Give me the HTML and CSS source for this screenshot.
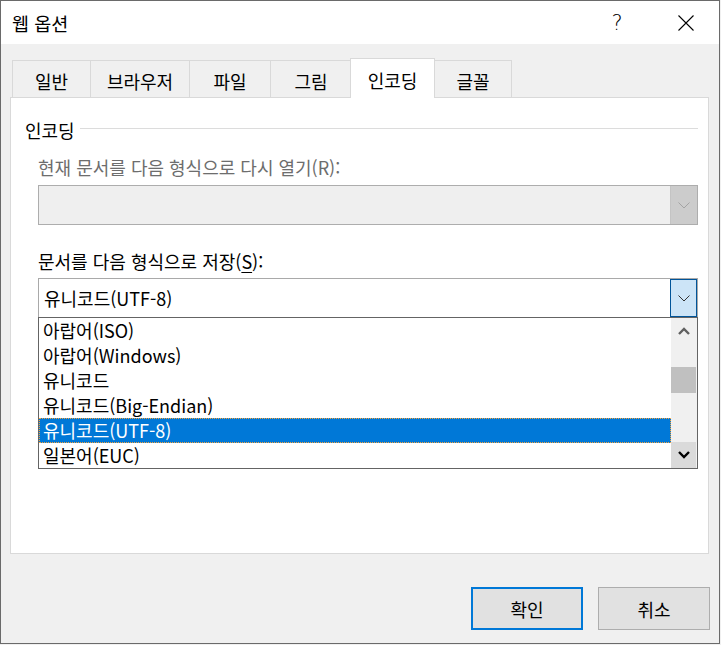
FILE: index.html
```html
<!DOCTYPE html>
<html lang="ko">
<head>
<meta charset="utf-8">
<title>웹 옵션</title>
<link rel="stylesheet" href="styles.css">
</head>
<body>
<div class="window">
  <div class="titlebar">
    <span class="title">웹 옵션</span>
    <span class="help">?</span>
    <span class="close"><svg width="16" height="16" viewBox="0 0 16 16"><path d="M0.5 0.5L15.5 15.5M15.5 0.5L0.5 15.5" stroke="#000" stroke-width="1.1" fill="none"/></svg></span>
  </div>
  <div class="tabs">
    <div class="tab t1">일반</div>
    <div class="tab t2">브라우저</div>
    <div class="tab t3">파일</div>
    <div class="tab t4">그림</div>
    <div class="tab t5 selected">인코딩</div>
    <div class="tab t6">글꼴</div>
  </div>
  <div class="panel">
    <div class="group-head"><span class="group-title">인코딩</span><span class="rule"></span></div>
    <div class="label disabled">현재 문서를 다음 형식으로 다시 열기(R):</div>
    <div class="combo combo-disabled">
      <div class="combo-value"></div>
      <div class="drop drop-disabled"><svg width="12" height="7" viewBox="0 0 12 7"><polyline points="0.5,0.5 6,6 11.5,0.5" fill="none" stroke="#a3a3a3" stroke-width="1"/></svg></div>
    </div>
    <div class="label">문서를 다음 형식으로 저장(<span class="ul">S</span>):</div>
    <div class="combo combo-active">
      <div class="combo-value">유니코드(UTF-8)</div>
      <div class="drop drop-active"><svg width="12" height="7" viewBox="0 0 12 7"><polyline points="0.5,0.5 6,6 11.5,0.5" fill="none" stroke="#333" stroke-width="1"/></svg></div>
    </div>
    <div class="listbox">
      <ul class="items">
        <li class="item">아랍어(ISO)</li>
        <li class="item">아랍어(Windows)</li>
        <li class="item">유니코드</li>
        <li class="item">유니코드(Big-Endian)</li>
        <li class="item selected-item">유니코드(UTF-8)</li>
        <li class="item">일본어(EUC)</li>
      </ul>
      <div class="scrollbar">
        <div class="sb-btn sb-up"><svg width="12" height="8" viewBox="0 0 12 8"><polyline points="1,7 6,2 11,7" fill="none" stroke="#606060" stroke-width="2.4"/></svg></div>
        <div class="sb-track"><div class="sb-thumb"></div></div>
        <div class="sb-btn sb-down"><svg width="12" height="8" viewBox="0 0 12 8"><polyline points="1,1 6,6 11,1" fill="none" stroke="#000" stroke-width="2.4"/></svg></div>
      </div>
    </div>
  </div>
  <div class="buttons">
    <button class="btn btn-default">확인</button>
    <button class="btn">취소</button>
  </div>
</div>
</body>
</html>
```

FILE: styles.css
```css
html, body {
  margin: 0;
  padding: 0;
  background: #f0f0f0;
}

.window {
  width: 720px;
  height: 644px;
  box-sizing: border-box;
  border: 1px solid #6a6a6a;
  background: #f0f0f0;
  display: flex;
  flex-direction: column;
  font-family: "Noto Sans CJK KR", "Noto Sans", sans-serif;
  font-size: 18px;
  color: #000;
}

.titlebar {
  height: 43px;
  flex: none;
  background: #fff;
  display: flex;
  align-items: center;
  padding: 0 10px 0 11px;
}

.title {
  font-size: 18.5px;
  line-height: 24px;
}

.help {
  margin-left: auto;
  width: 46px;
  text-align: center;
  font-family: "DejaVu Sans", sans-serif;
  font-weight: 200;
  font-size: 21px;
  line-height: 24px;
  color: #000;
}

.close {
  width: 46px;
  margin-left: 23px;
  display: flex;
  justify-content: center;
  align-items: center;
}

.close svg {
  display: block;
}

.tabs {
  flex: none;
  display: flex;
  align-items: flex-end;
  height: 40px;
  margin-top: 14px;
  padding-left: 11px;
}

.tab {
  box-sizing: border-box;
  height: 38px;
  border: 1px solid #d9d9d9;
  border-bottom: none;
  background: #f0f0f0;
  display: flex;
  justify-content: center;
  align-items: center;
  padding-top: 2px;
  line-height: 24px;
}

.t1 { width: 79px; }
.t2 { width: 100px; margin-left: -1px; }
.t3 { width: 82px; margin-left: -1px; }
.t4 { width: 82px; margin-left: -1px; }
.t5 { width: 85px; margin-left: -2px; }
.t6 { width: 78px; margin-left: -1px; }

.tab.selected {
  height: 40px;
  background: #fff;
  position: relative;
  z-index: 1;
  padding-top: 2px;
}

.panel {
  flex: none;
  box-sizing: border-box;
  width: 699px;
  height: 457px;
  margin: -1px 0 0 9px;
  border: 1px solid #d9d9d9;
  background: #fff;
  padding: 0 10px 0 27px;
}

.group-head {
  display: flex;
  margin: 20px 0 0 -13px;
  height: 24px;
  line-height: 24px;
}

.rule {
  flex: 1;
  height: 1px;
  background: #dcdcdc;
  margin: 10px 0 0 5px;
}

.label {
  line-height: 24px;
  height: 24px;
  margin-top: 13px;
  white-space: nowrap;
}

.label.disabled {
  color: #6d6d6d;
}

.ul {
  text-decoration: underline;
  text-underline-offset: 3px;
}

.combo {
  box-sizing: border-box;
  display: flex;
  width: 660px;
}

.combo-disabled {
  height: 40px;
  margin-top: 6px;
  border: 1px solid #adadad;
  background: #efefef;
}

.combo-disabled + .label {
  margin-top: 24px;
}

.combo-active {
  height: 39px;
  margin-top: 5px;
  border: 1px solid #a9a9a9;
  border-bottom: none;
  background: #fff;
}

.combo-value {
  flex: 1;
  padding-left: 5px;
  line-height: 38px;
  white-space: nowrap;
}

.drop {
  box-sizing: border-box;
  width: 27px;
  display: flex;
  justify-content: center;
  align-items: center;
}

.drop svg {
  display: block;
}

.drop-disabled {
  background: #cccccc;
  border-left: 1px solid #c4c4c4;
}

.drop-active {
  height: 38px;
  background: #cce4f7;
  border: 1px solid #005499;
  padding-top: 1px;
}

.listbox {
  box-sizing: border-box;
  width: 660px;
  height: 152px;
  border: 1px solid #646464;
  display: flex;
  background: #fff;
}

.items {
  list-style: none;
  margin: 0;
  padding: 0;
  flex: 1;
}

.item {
  box-sizing: border-box;
  height: 25px;
  line-height: 25px;
  padding-left: 4px;
  white-space: nowrap;
}

.selected-item {
  background: #0078d7;
  color: #fff;
  outline: 1px dotted #f5a33c;
  outline-offset: -1px;
}

.scrollbar {
  width: 26px;
  display: flex;
  flex-direction: column;
  background: #f0f0f0;
}

.sb-btn {
  display: flex;
  justify-content: center;
  align-items: center;
}

.sb-btn svg {
  display: block;
}

.sb-up {
  height: 25px;
}

.sb-track {
  flex: 1;
}

.sb-thumb {
  margin: 24px 1px 0 0;
  height: 26px;
  background: #c0c0c0;
}

.sb-down {
  height: 26px;
  margin-right: 1px;
  background: #dadada;
}

.buttons {
  flex: none;
  display: flex;
  justify-content: flex-end;
  gap: 15px;
  margin-top: 33px;
  padding-right: 9px;
}

.btn {
  box-sizing: border-box;
  width: 112px;
  height: 43px;
  border: 1px solid #adadad;
  background: #e1e1e1;
  font-family: "Noto Sans CJK KR", "Noto Sans", sans-serif;
  font-size: 18px;
  color: #000;
  padding: 0;
  margin: 0;
}

.btn-default {
  border: 2px solid #0078d7;
}
```
